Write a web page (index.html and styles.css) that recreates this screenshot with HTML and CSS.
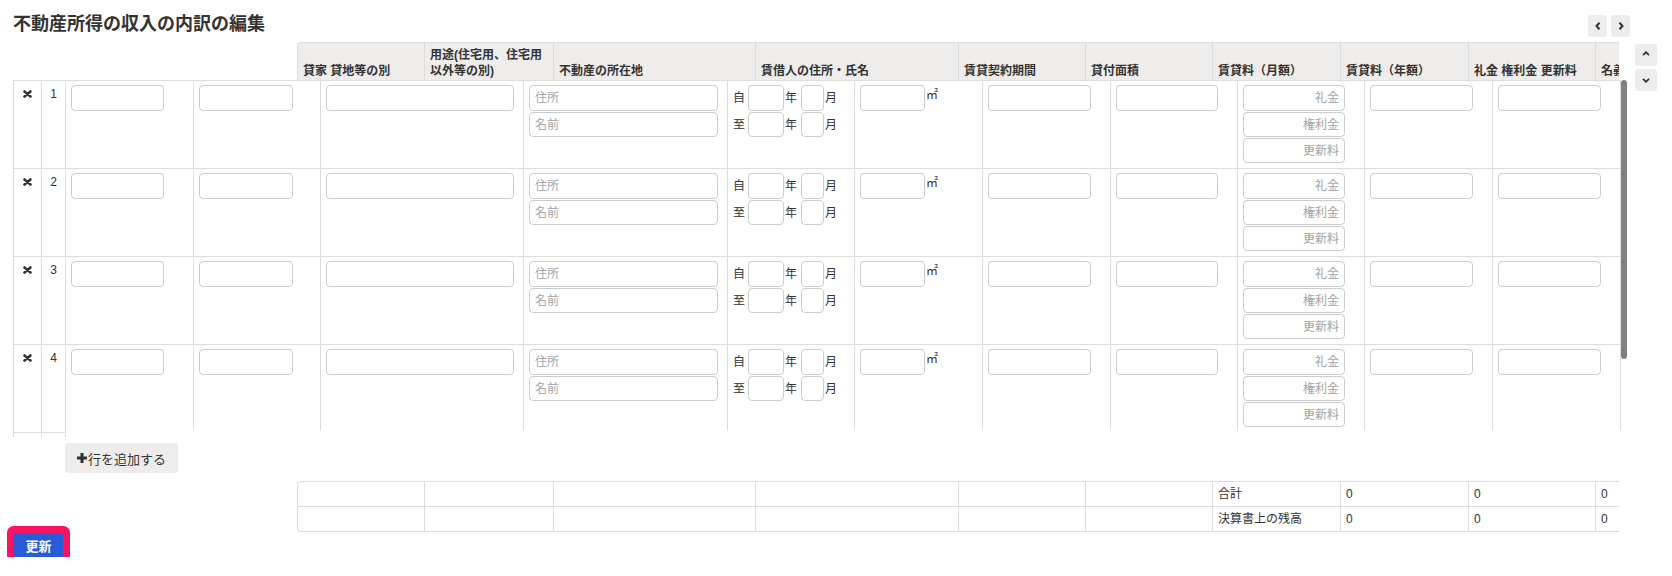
FILE: index.html
```html
<!DOCTYPE html>
<html lang="ja">
<head>
<meta charset="utf-8">
<title>不動産所得の収入の内訳の編集</title>
<link rel="stylesheet" href="styles.css">
</head>
<body>
<div class="page">
  <div class="top">
    <h1 class="title">不動産所得の収入の内訳の編集</h1>
    <div class="hnav">
      <button class="nbtn" type="button"><svg width="6" height="8" viewBox="0 0 6 8"><polyline points="4.5,0.8 1.5,4 4.5,7.2" fill="none" stroke="#333" stroke-width="2"/></svg></button>
      <button class="nbtn" type="button"><svg width="6" height="8" viewBox="0 0 6 8"><polyline points="1.5,0.8 4.5,4 1.5,7.2" fill="none" stroke="#333" stroke-width="2"/></svg></button>
    </div>
  </div>

  <div class="area">
    <div class="grid">
      <div class="thead">
        <div class="th h1">貸家 貸地等の別</div>
        <div class="th h2">用途(住宅用、住宅用<br>以外等の別)</div>
        <div class="th h3">不動産の所在地</div>
        <div class="th h4">賃借人の住所・氏名</div>
        <div class="th h5">賃貸契約期間</div>
        <div class="th h6">貸付面積</div>
        <div class="th h7">賃貸料（月額）</div>
        <div class="th h8">賃貸料（年額）</div>
        <div class="th h9">礼金 権利金 更新料</div>
        <div class="th h10">名義書換料</div>
      </div>

      <div class="tbody">
        <div class="rh">
          <div class="rrow"><div class="rx"><svg class="del" width="9" height="8" viewBox="0 0 9 8"><path d="M1.5 1.5 L7.5 6.5 M7.5 1.5 L1.5 6.5" stroke="#333" stroke-width="2.6" stroke-linecap="round"/></svg></div><div class="rn">1</div></div>
          <div class="rrow"><div class="rx"><svg class="del" width="9" height="8" viewBox="0 0 9 8"><path d="M1.5 1.5 L7.5 6.5 M7.5 1.5 L1.5 6.5" stroke="#333" stroke-width="2.6" stroke-linecap="round"/></svg></div><div class="rn">2</div></div>
          <div class="rrow"><div class="rx"><svg class="del" width="9" height="8" viewBox="0 0 9 8"><path d="M1.5 1.5 L7.5 6.5 M7.5 1.5 L1.5 6.5" stroke="#333" stroke-width="2.6" stroke-linecap="round"/></svg></div><div class="rn">3</div></div>
          <div class="rrow"><div class="rx"><svg class="del" width="9" height="8" viewBox="0 0 9 8"><path d="M1.5 1.5 L7.5 6.5 M7.5 1.5 L1.5 6.5" stroke="#333" stroke-width="2.6" stroke-linecap="round"/></svg></div><div class="rn">4</div></div>
          <div class="rrow"><div class="rx"></div><div class="rn"></div></div>
        </div>

        <div class="data">
          <div class="drow">
            <div class="c c1"><input class="in w93"></div>
            <div class="c c2"><input class="in w94"></div>
            <div class="c c3"><input class="in w188"></div>
            <div class="c c4"><div class="stack"><input class="in w189" placeholder="住所"><input class="in w189" placeholder="名前"></div></div>
            <div class="c c5"><div class="pl"><span class="lb">自</span><input class="in yy"><span class="lb u">年</span><input class="in mm"><span class="lb u">月</span></div><div class="pl"><span class="lb">至</span><input class="in yy"><span class="lb u">年</span><input class="in mm"><span class="lb u">月</span></div></div>
            <div class="c c6"><div class="ar"><input class="in w65"><span class="sq">㎡</span></div></div>
            <div class="c c7"><input class="in w103"></div>
            <div class="c c8"><input class="in w102"></div>
            <div class="c c9"><div class="stack"><input class="in w102 r" placeholder="礼金"><input class="in w102 r" placeholder="権利金"><input class="in w102 r" placeholder="更新料"></div></div>
            <div class="c c10"><input class="in w103"></div>
            <div class="c c11"><input class="in w103"></div>
          </div>
          <div class="drow">
            <div class="c c1"><input class="in w93"></div>
            <div class="c c2"><input class="in w94"></div>
            <div class="c c3"><input class="in w188"></div>
            <div class="c c4"><div class="stack"><input class="in w189" placeholder="住所"><input class="in w189" placeholder="名前"></div></div>
            <div class="c c5"><div class="pl"><span class="lb">自</span><input class="in yy"><span class="lb u">年</span><input class="in mm"><span class="lb u">月</span></div><div class="pl"><span class="lb">至</span><input class="in yy"><span class="lb u">年</span><input class="in mm"><span class="lb u">月</span></div></div>
            <div class="c c6"><div class="ar"><input class="in w65"><span class="sq">㎡</span></div></div>
            <div class="c c7"><input class="in w103"></div>
            <div class="c c8"><input class="in w102"></div>
            <div class="c c9"><div class="stack"><input class="in w102 r" placeholder="礼金"><input class="in w102 r" placeholder="権利金"><input class="in w102 r" placeholder="更新料"></div></div>
            <div class="c c10"><input class="in w103"></div>
            <div class="c c11"><input class="in w103"></div>
          </div>
          <div class="drow">
            <div class="c c1"><input class="in w93"></div>
            <div class="c c2"><input class="in w94"></div>
            <div class="c c3"><input class="in w188"></div>
            <div class="c c4"><div class="stack"><input class="in w189" placeholder="住所"><input class="in w189" placeholder="名前"></div></div>
            <div class="c c5"><div class="pl"><span class="lb">自</span><input class="in yy"><span class="lb u">年</span><input class="in mm"><span class="lb u">月</span></div><div class="pl"><span class="lb">至</span><input class="in yy"><span class="lb u">年</span><input class="in mm"><span class="lb u">月</span></div></div>
            <div class="c c6"><div class="ar"><input class="in w65"><span class="sq">㎡</span></div></div>
            <div class="c c7"><input class="in w103"></div>
            <div class="c c8"><input class="in w102"></div>
            <div class="c c9"><div class="stack"><input class="in w102 r" placeholder="礼金"><input class="in w102 r" placeholder="権利金"><input class="in w102 r" placeholder="更新料"></div></div>
            <div class="c c10"><input class="in w103"></div>
            <div class="c c11"><input class="in w103"></div>
          </div>
          <div class="drow">
            <div class="c c1"><input class="in w93"></div>
            <div class="c c2"><input class="in w94"></div>
            <div class="c c3"><input class="in w188"></div>
            <div class="c c4"><div class="stack"><input class="in w189" placeholder="住所"><input class="in w189" placeholder="名前"></div></div>
            <div class="c c5"><div class="pl"><span class="lb">自</span><input class="in yy"><span class="lb u">年</span><input class="in mm"><span class="lb u">月</span></div><div class="pl"><span class="lb">至</span><input class="in yy"><span class="lb u">年</span><input class="in mm"><span class="lb u">月</span></div></div>
            <div class="c c6"><div class="ar"><input class="in w65"><span class="sq">㎡</span></div></div>
            <div class="c c7"><input class="in w103"></div>
            <div class="c c8"><input class="in w102"></div>
            <div class="c c9"><div class="stack"><input class="in w102 r" placeholder="礼金"><input class="in w102 r" placeholder="権利金"><input class="in w102 r" placeholder="更新料"></div></div>
            <div class="c c10"><input class="in w103"></div>
            <div class="c c11"><input class="in w103"></div>
          </div>
        </div>
        <div class="vscroll"></div>
      </div>

      <button class="addrow" type="button"><svg class="plus" width="10" height="10" viewBox="0 0 10 10"><rect x="3.5" y="0" width="3" height="10" fill="#333"/><rect x="0" y="3.5" width="10" height="3" fill="#333"/></svg>行を追加する</button>

      <div class="tfoot">
        <div class="frow">
          <div class="fc h1"></div><div class="fc h2"></div><div class="fc h3"></div><div class="fc h4"></div><div class="fc h5"></div><div class="fc h6"></div>
          <div class="fc h7">合計</div><div class="fc h8">0</div><div class="fc h9">0</div><div class="fc h10">0</div>
        </div>
        <div class="frow">
          <div class="fc h1"></div><div class="fc h2"></div><div class="fc h3"></div><div class="fc h4"></div><div class="fc h5"></div><div class="fc h6"></div>
          <div class="fc h7">決算書上の残高</div><div class="fc h8">0</div><div class="fc h9">0</div><div class="fc h10">0</div>
        </div>
      </div>
    </div>

    <div class="vnav">
      <button class="vbtn" type="button"><svg class="up" width="8" height="5" viewBox="0 0 8 5"><polyline points="1,4.2 4,1.2 7,4.2" fill="none" stroke="#333" stroke-width="1.8"/></svg></button>
      <button class="vbtn" type="button"><svg width="8" height="5" viewBox="0 0 8 5"><polyline points="1,0.8 4,3.8 7,0.8" fill="none" stroke="#333" stroke-width="1.8"/></svg></button>
    </div>
  </div>

  <button class="update" type="button">更新</button>
</div>
</body>
</html>
```

FILE: styles.css
```css
* { box-sizing: border-box; }

body {
  margin: 0;
  background: #fff;
  color: #333;
  font-family: "Liberation Sans", "Noto Sans CJK JP", sans-serif;
  font-size: 12px;
}

.page { width: 1672px; }

/* title row */
.top {
  display: flex;
  justify-content: space-between;
  align-items: flex-start;
  height: 42px;
  padding: 12px 42px 0 13px;
}
.title {
  margin: 0;
  font-size: 18px;
  line-height: 24px;
  font-weight: bold;
  color: #333;
}
.hnav { display: flex; gap: 4px; margin-top: 3px; }
.nbtn, .vbtn {
  display: flex;
  align-items: center;
  justify-content: center;
  padding: 0;
  border: 0;
  border-radius: 3px;
  background: #efedeb;
}
.nbtn { width: 19px; height: 22px; }
.vbtn { width: 22px; height: 22px; }
.up { margin-top: -4px; }

/* grid area */
.area { display: flex; align-items: flex-start; }
.grid { margin-left: 13px; width: 1614px; flex: none; }
.vnav {
  margin: 2px 0 0 8px;
  display: flex;
  flex-direction: column;
  gap: 3px;
}

.thead {
  margin-left: 284px;
  width: 1322px;
  height: 38px;
  display: flex;
  background: #efedeb;
  border-top: 1px solid #dcdcdc;
  border-left: 1px solid #dcdcdc;
  border-top-left-radius: 4px;
  overflow: hidden;
}
.th {
  flex: none;
  display: flex;
  align-items: flex-end;
  padding: 0 3px 1px 5px;
  border-right: 1px solid #dcdcdc;
  font-weight: bold;
  line-height: 16px;
  white-space: nowrap;
  overflow: hidden;
}
.h1 { width: 127px; }
.h2 { width: 129px; }
.h3 { width: 202px; }
.h4 { width: 203px; }
.h5 { width: 127px; }
.h6 { width: 127px; }
.h7 { width: 128px; }
.h8 { width: 128px; }
.h9 { width: 127px; }
.h10 { width: 120px; border-right: 0; }

/* body */
.tbody {
  position: relative;
  display: flex;
  align-items: flex-start;
}
.rh {
  flex: none;
  width: 53px;
  height: 357px;
  overflow: hidden;
  border-left: 1px solid #ddd;
  border-top: 1px solid #ddd;
}
.rrow {
  display: flex;
  height: 88px;
  border-bottom: 1px solid #ddd;
}
.rx {
  width: 28px;
  border-right: 1px solid #ddd;
  display: flex;
  justify-content: center;
  align-items: flex-start;
  padding-top: 9px;
}
.rn {
  width: 24px;
  border-right: 1px solid #ddd;
  text-align: center;
  padding-top: 4px;
  line-height: 18px;
}

.data {
  flex: none;
  width: 1555px;
  height: 351px;
  overflow: hidden;
  border-top: 1px solid #ddd;
}
.drow {
  display: flex;
  height: 88px;
  border-bottom: 1px solid #ddd;
}
.c {
  flex: none;
  border-right: 1px solid #ddd;
  padding: 4px 0 0 5px;
}
.c1 { width: 128px; }
.c2 { width: 127px; }
.c3 { width: 203px; }
.c4 { width: 204px; }
.c5 { width: 127px; }
.c6 { width: 128px; }
.c7 { width: 128px; }
.c8 { width: 127px; }
.c9 { width: 127px; }
.c10 { width: 128px; }
.c11 { width: 128px; }

.in {
  display: block;
  height: 26px;
  margin: 0;
  padding: 0 5px;
  border: 1px solid #ccc;
  border-radius: 4px;
  background: #fff;
  color: #333;
  font-family: inherit;
  font-size: 12px;
  outline: none;
}
.in::placeholder { color: #a3a3a3; }
.in.r { text-align: right; }
.w93 { width: 93px; }
.w94 { width: 94px; }
.w188 { width: 188px; }
.w189 { width: 189px; }
.w65 { width: 65px; }
.w102 { width: 102px; }
.w103 { width: 103px; }

.stack .in + .in { margin-top: 1px; height: 25px; }

.pl { display: flex; align-items: center; height: 26px; }
.pl + .pl { margin-top: 1px; height: 25px; }
.pl .in { height: 100%; }
.lb { width: 12px; line-height: 16px; flex: none; }
.lb.u { margin-left: 1px; }
.yy { width: 36px; margin-left: 3px; }
.mm { width: 23px; margin-left: 4px; }

.ar { display: flex; align-items: flex-start; }
.sq { margin: 4px 0 0 1px; line-height: 12px; }

.vscroll {
  position: absolute;
  left: 1608px;
  top: 0;
  width: 6px;
  height: 279px;
  border-radius: 3px;
  background: #808080;
}

/* add row */
.addrow {
  display: flex;
  align-items: center;
  margin: 6px 0 0 52px;
  width: 113px;
  height: 30px;
  padding: 0 0 0 12px;
  border: 0;
  border-radius: 3px;
  background: #efedeb;
  color: #333;
  font-family: inherit;
  font-size: 13px;
}
.plus { margin-right: 1px; flex: none; }

/* footer totals */
.tfoot {
  margin: 8px 0 0 284px;
  width: 1322px;
  border: 1px solid #ddd;
  border-right: 0;
  border-radius: 4px 0 0 4px;
  overflow: hidden;
}
.frow { display: flex; height: 24px; }
.frow + .frow { border-top: 1px solid #ddd; height: 25px; }
.fc {
  flex: none;
  border-right: 1px solid #ddd;
  padding-left: 5px;
  line-height: 24px;
  white-space: nowrap;
}
.fc.h10 { border-right: 0; }

/* update */
.update {
  display: block;
  margin: 1px 0 0 14px;
  width: 49px;
  height: 24px;
  padding: 0;
  border: 0;
  border-radius: 2px;
  background: #2a5bd7;
  color: #fff;
  font-family: inherit;
  font-size: 13px;
  font-weight: bold;
  box-shadow: 0 0 0 7px #fc1261;
}
```
